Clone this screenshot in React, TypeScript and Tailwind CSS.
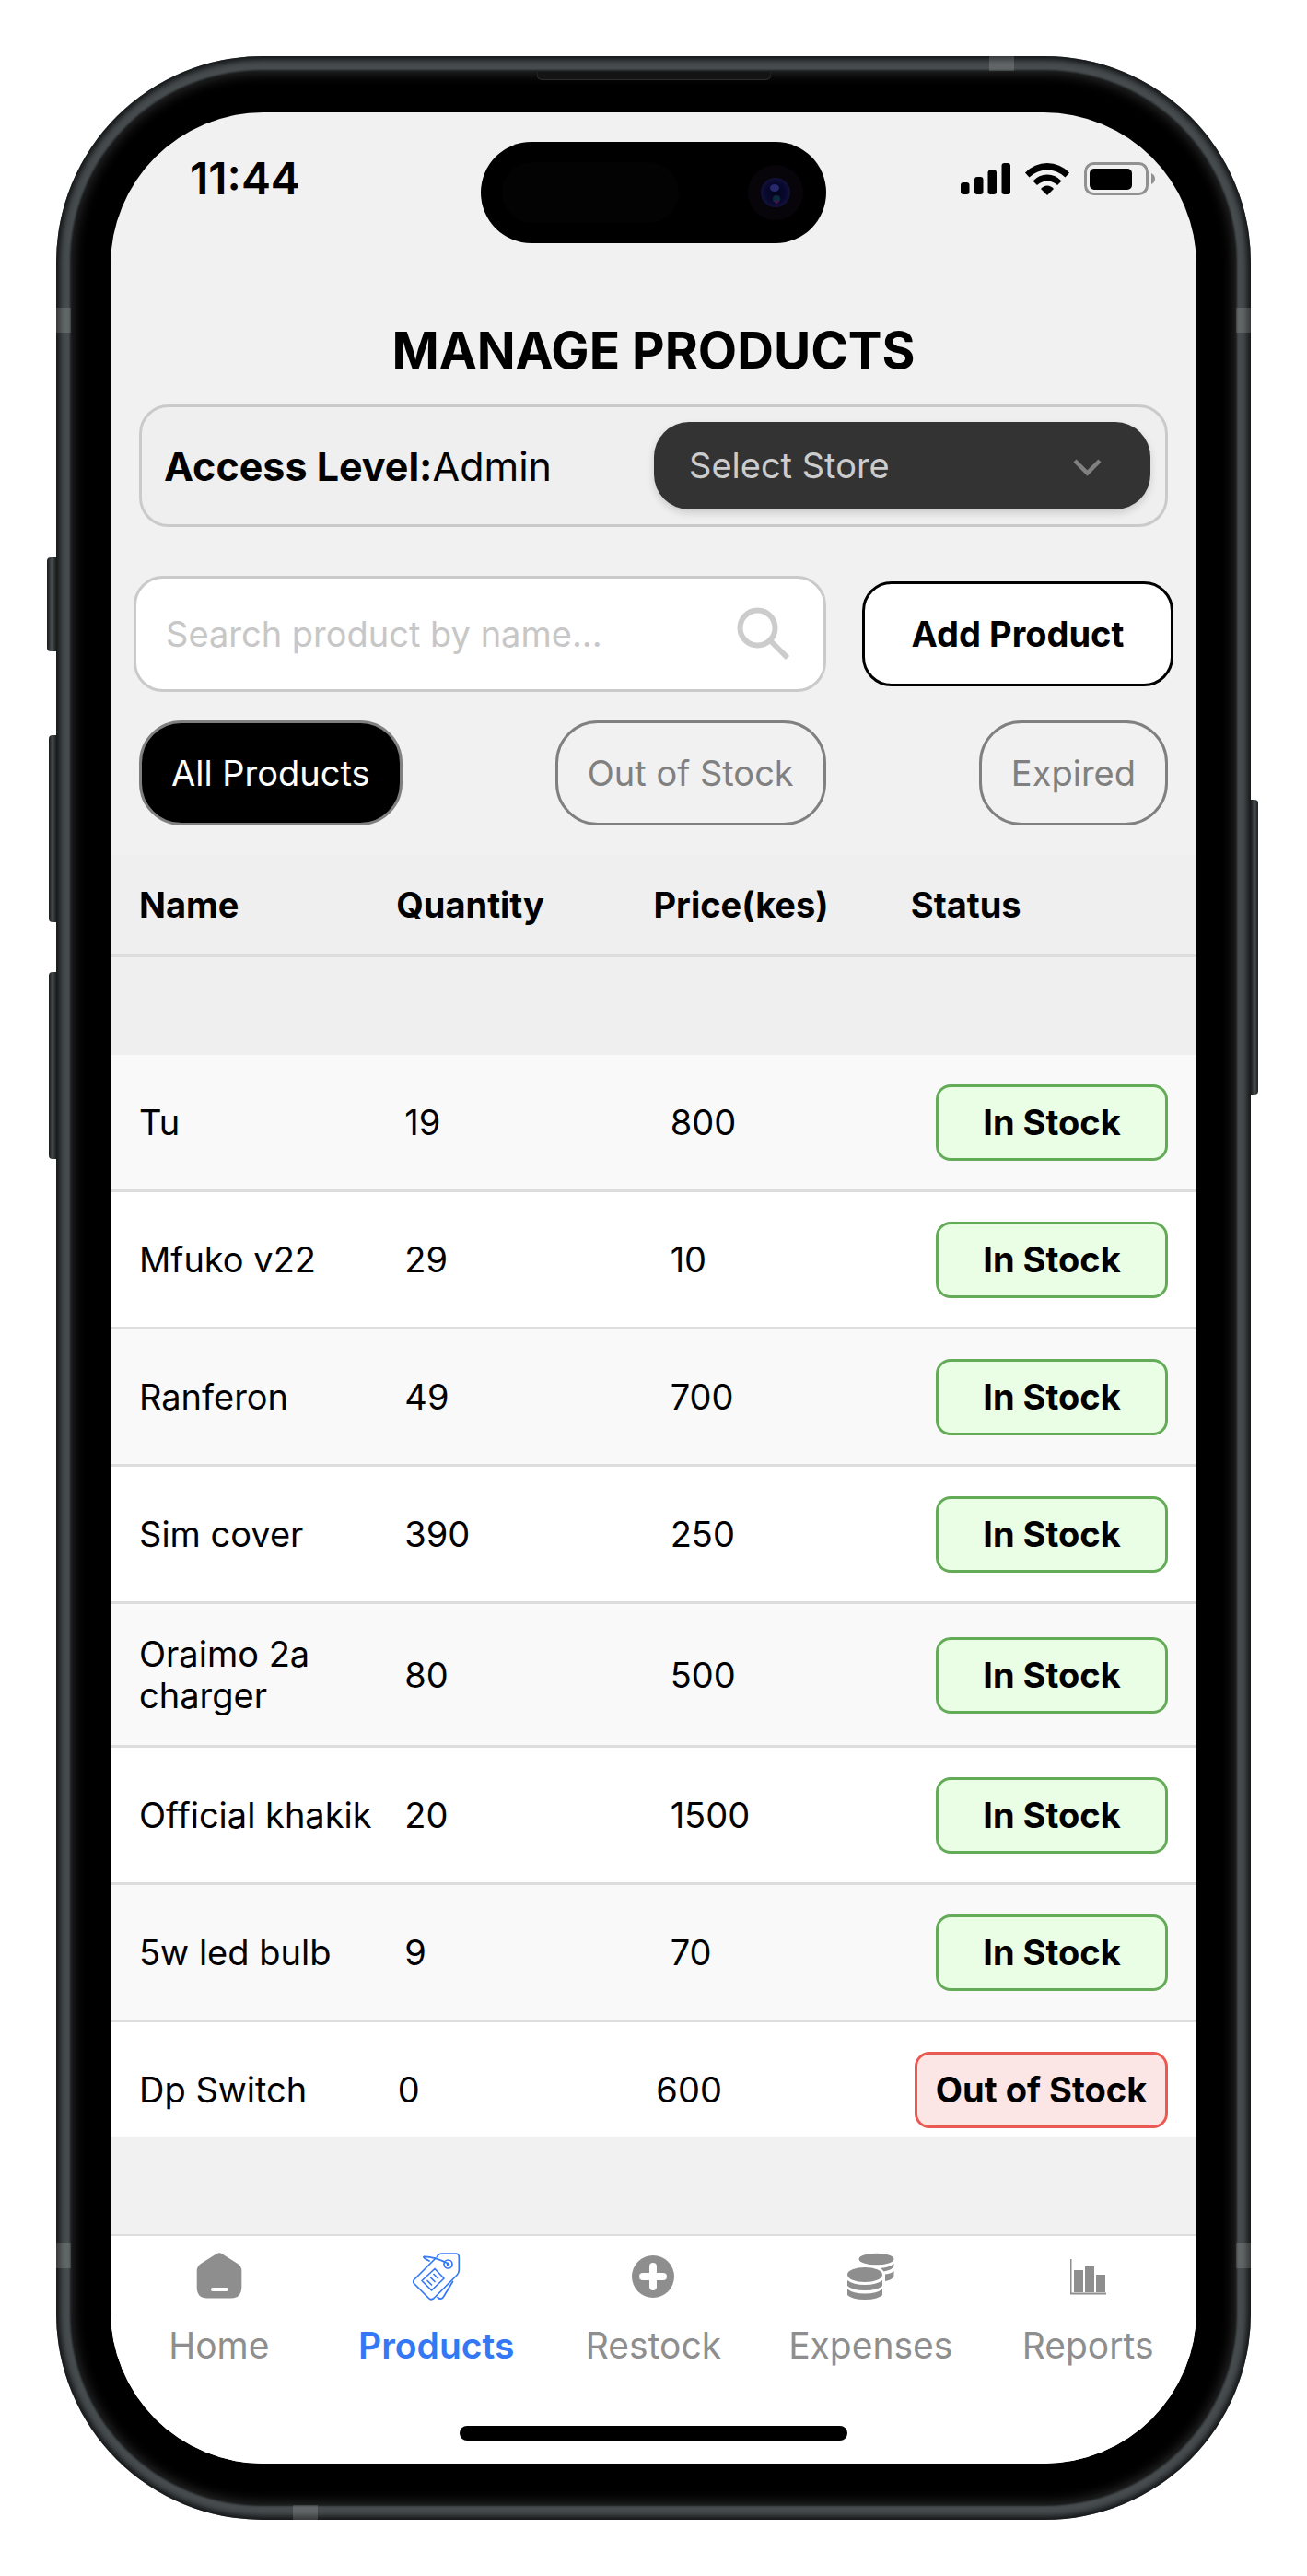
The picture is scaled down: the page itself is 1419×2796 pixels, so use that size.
import React from 'react';

type Product = {
  name: string;
  quantity: number;
  price: number;
};

const products: Product[] = [
  { name: 'Tu', quantity: 19, price: 800 },
  { name: 'Mfuko v22', quantity: 29, price: 10 },
  { name: 'Ranferon', quantity: 49, price: 700 },
  { name: 'Sim cover', quantity: 390, price: 250 },
  { name: 'Oraimo 2a charger', quantity: 80, price: 500 },
  { name: 'Official khakik', quantity: 20, price: 1500 },
  { name: '5w led bulb', quantity: 9, price: 70 },
  { name: 'Dp Switch', quantity: 0, price: 600 },
];

const HomeIcon = () => (
  <svg width="50" height="50" viewBox="0 0 50 50">
    <path d="M22 1.2Q25-.6 28 1.2L45 12Q49 14.800 49.300 19V38Q49 49.500 38 49.500H12Q1 49.500 .7 38V19Q1 14.800 5 12Z" fill="#8e8e8e" />
    <rect x="16" y="38" width="19" height="4" rx="2" fill="#fff" />
  </svg>
);

const TagIcon = () => (
  <svg width="52" height="52" viewBox="0 0 52 52" fill="none" stroke="#3478f6" strokeWidth="1.700" strokeLinecap="round" strokeLinejoin="round">
    <path d="M26.500 4.500Q28 1 32 1H46.500Q50.300 1 50.300 5V19Q50.300 22 48 24.500L23 49.500Q20 52 17.500 49.500L1.500 33.500Q-.2 31.500 1.500 29.500L25 6" />
    <path d="M18 9Q10 5 12.500 4.400Q22 4 38 11.500" />
    <circle cx="38.500" cy="12.500" r="4.500" />
    <circle cx="38.500" cy="12.500" r="1" fill="#3478f6" />
    <path d="M24 17.500L34 28L20.500 41L10 30.500ZM16 30.500L20.500 35M19.500 27L24 31.500M23 23.500L27.500 28" />
    <path d="M27 48.500Q31 52 33.500 48L43.500 31.500" />
  </svg>
);

const PlusIcon = () => (
  <svg width="46" height="50" viewBox="0 0 46 50">
    <circle cx="23" cy="26" r="23" fill="#8e8e8e" />
    <path d="M23 15V37M12 26H34" stroke="#fff" strokeWidth="8" strokeLinecap="round" />
  </svg>
);

const CoinsIcon = () => (
  <svg width="51" height="51" viewBox="0 0 51 51" fill="#8e8e8e">
    <ellipse cx="31.500" cy="7" rx="19" ry="6.300" />
    <path d="M36 17Q46 16 50.500 12V15Q48 19 39.500 20.500Q38 18 36 17Z" />
    <path d="M41 23.500Q48 22.500 50.500 20V25.500Q48 30 41 31Z" />
    <ellipse cx="19" cy="24" rx="19" ry="8" />
    <path d="M0 30Q6 35 19 35T38 30V36Q33 41 19 41T0 36Z" />
    <path d="M0 39.500Q6 44.500 19 44.500T38 39.500V46Q33 51 19 51T0 46Z" />
  </svg>
);

const ChartIcon = () => (
  <svg width="39" height="50" viewBox="0 0 39 50" fill="#8e8e8e">
    <path d="M0 7H1.500V43.500H39V45.500H0ZM4 19H14V43H4ZM16 15H26V43H16ZM28 24H38V43H28Z" />
  </svg>
);

const tabs = [
  { label: 'Home', icon: <HomeIcon /> },
  { label: 'Products', icon: <TagIcon />, active: true },
  { label: 'Restock', icon: <PlusIcon /> },
  { label: 'Expenses', icon: <CoinsIcon /> },
  { label: 'Reports', icon: <ChartIcon /> },
];

const StatusBar = () => (
  <header className="grid grid-cols-[1fr_375px_1fr] items-start pt-8">
    <time className="mt-3 pl-[86px] text-[48px] leading-[56px] font-semibold">11:44</time>
    <div className="flex h-[110px] items-center justify-between rounded-full bg-black pr-[25px] pl-[23px]">
      <div className="h-[66px] w-[192px] rounded-full bg-[#030303]" />
      <svg width="60" height="62" viewBox="0 0 60 62">
        <defs>
          <radialGradient id="lens">
            <stop offset="0" stopColor="#05051c" />
            <stop offset="0.650" stopColor="#08082e" />
            <stop offset="1" stopColor="#12123a" />
          </radialGradient>
        </defs>
        <circle cx="30" cy="31" r="30" fill="#08050a" />
        <circle cx="30" cy="31" r="16" fill="url(#lens)" />
        <ellipse cx="29" cy="26" rx="5" ry="4" fill="#28286e" />
        <ellipse cx="31" cy="38" rx="4" ry="4" fill="#0b2c3c" />
        <circle cx="31" cy="41" r="2" fill="#4a1247" />
      </svg>
    </div>
    <div className="mt-3 flex h-14 items-center justify-end gap-4 pr-11">
      <svg width="54" height="34" viewBox="0 0 54 34">
        <rect x="0" y="21" width="9.500" height="13" rx="3" />
        <rect x="15" y="15" width="9.500" height="19" rx="3" />
        <rect x="29.500" y="7.500" width="9.500" height="26.500" rx="3" />
        <rect x="44.500" y="0" width="9.500" height="34" rx="3" />
      </svg>
      <svg width="48" height="35" viewBox="0 0 48 35">
        <path d="M0 10.500Q10 0 24 0T48 10.500L43.500 15.500Q35 7.500 24 7.500T4.500 15.500Z" />
        <path d="M8.500 19.500Q15 12.500 24 12.500T39.500 19.500L35 24Q30 19.500 24 19.500T13 24Z" />
        <path d="M17 28Q20 24.500 24 24.500T31 28L24 35Z" />
      </svg>
      <svg width="78" height="36" viewBox="0 0 78 36">
        <rect x="1.500" y="1.500" width="67" height="33" rx="9" fill="none" stroke="#919191" strokeWidth="3" />
        <rect x="6" y="7" width="46" height="23" rx="5" />
        <path d="M73 12Q77 14 77 18T73 24Z" fill="#919191" />
      </svg>
    </div>
  </header>
);

const StoreBar = () => (
  <section className="mx-[31px] mt-[27px] flex items-center justify-between rounded-[32px] border-[3px] border-[#cacaca] bg-[#efefef] py-4 pr-4 pl-6">
    <p className="text-[43px] leading-[56px]">
      <b>Access Level:</b>Admin
    </p>
    <div className="relative w-[539px]">
      <select
        aria-label="Store"
        className="h-[95px] w-full appearance-none rounded-[38px] bg-[#333] px-[38px] text-[38px] text-[#ccc] shadow-[0_4px_8px_rgba(0,0,0,0.150)]"
      >
        <option>Select Store</option>
      </select>
      <svg className="pointer-events-none absolute top-[38px] right-[52px]" width="33" height="22" viewBox="0 0 33 22">
        <path d="M3 4L16.500 17.500L30 4" fill="none" stroke="#808080" strokeWidth="4.500" />
      </svg>
    </div>
  </section>
);

const SearchBar = () => (
  <section className="mx-[25px] mt-[53px] flex items-center gap-[39px]">
    <label className="flex h-[126px] min-w-0 flex-1 items-center rounded-[32px] border-[3px] border-[#cacaca] bg-white pr-9 pl-8">
      <input
        type="text"
        aria-label="Search product"
        placeholder="Search product by name..."
        className="min-w-0 flex-1 text-[38px] outline-none placeholder:text-[#c7c7c7]"
      />
      <svg width="58" height="58" viewBox="0 0 58 58" fill="none" stroke="#ccc" strokeWidth="6">
        <circle cx="22.500" cy="22.500" r="19" />
        <path d="M36 36L55 55" />
      </svg>
    </label>
    <button className="h-[114px] w-[338px] rounded-[32px] border-[3px] border-black bg-white text-[38px] font-bold">
      Add Product
    </button>
  </section>
);

const Filters = () => (
  <nav className="mx-[31px] mt-[31px] mb-8 flex justify-between text-[38px]">
    <button className="h-[114px] rounded-[46px] border-[3px] border-[#808080] bg-black px-8 text-white">All Products</button>
    <button className="h-[114px] rounded-[46px] border-[3px] border-[#808080] px-8 text-[#808080]">Out of Stock</button>
    <button className="h-[114px] rounded-[46px] border-[3px] border-[#808080] px-8 text-[#808080]">Expired</button>
  </nav>
);

const ProductTable = () => (
  <table className="block text-[38px] leading-[45px]">
    <thead className="block bg-[#efefef] pb-[106px]">
      <tr className="flex border-b-[3px] border-[#ddd] px-[31px] pt-8 pb-[31px] text-left">
        <th className="flex-1 font-bold">Name</th>
        <th className="flex-1 font-bold">Quantity</th>
        <th className="flex-1 font-bold">Price(kes)</th>
        <th className="flex-1 font-bold">Status</th>
      </tr>
    </thead>
    <tbody className="block">
      {products.map(({ name, quantity, price }) => (
        <tr
          key={name}
          className="flex items-center border-b-[3px] border-[#ddd] bg-white px-[31px] pt-8 pb-[31px] odd:bg-[#f9f9f9] last:border-0 last:pb-[9px]"
        >
          <td className="flex-1">{name}</td>
          <td className="flex-1">{quantity}</td>
          <td className="flex-1">{price}</td>
          <td>
            {quantity > 0 ? (
              <span className="flex h-[83px] w-[252px] items-center justify-center rounded-2xl border-[3px] border-[#64ab58] bg-[#eafee6] font-bold">
                In Stock
              </span>
            ) : (
              <span className="flex h-[83px] w-[275px] items-center justify-center rounded-2xl border-[3px] border-[#eb5a52] bg-[#fce6e5] font-bold">
                Out of Stock
              </span>
            )}
          </td>
        </tr>
      ))}
    </tbody>
  </table>
);

const TabBar = () => (
  <footer className="mt-[106px] border-t-2 border-[#ddd] bg-white pb-[25px]">
    <nav className="grid grid-cols-5">
      {tabs.map(({ label, icon, active }) => (
        <a
          key={label}
          href="#"
          className={
            active
              ? 'flex flex-col items-center pt-[18px] text-[39px] font-semibold text-[#3478f6]'
              : 'flex flex-col items-center pt-[18px] text-[39px] text-[#8e8e8e]'
          }
        >
          <span className="flex h-[52px] items-start">{icon}</span>
          <span className="mt-[22px] leading-[54px]">{label}</span>
        </a>
      ))}
    </nav>
    <div className="mx-auto mt-[60px] h-4 w-[421px] rounded-full bg-black" />
  </footer>
);

// Hardware buttons and antenna lines around the edge of the phone
const FrameDetails = () => (
  <>
    <i className="absolute top-[544px] -left-[10px] h-[102px] w-[10px] rounded-l bg-linear-to-r from-[#17191a] via-[#4a4f51] to-[#1d1f20]" />
    <i className="absolute top-[737px] -left-2 h-[203px] w-2 rounded-l bg-linear-to-r from-[#17191a] via-[#4a4f51] to-[#1d1f20]" />
    <i className="absolute top-[994px] -left-2 h-[203px] w-2 rounded-l bg-linear-to-r from-[#17191a] via-[#4a4f51] to-[#1d1f20]" />
    <i className="absolute top-[807px] -right-2 h-[320px] w-2 rounded-r bg-linear-to-r from-[#17191a] via-[#4a4f51] to-[#1d1f20]" />
    <i className="absolute top-[273px] left-0 h-[27px] w-4 bg-white/15" />
    <i className="absolute top-[273px] right-0 h-[27px] w-4 bg-white/15" />
    <i className="absolute bottom-[273px] left-0 h-[27px] w-4 bg-white/15" />
    <i className="absolute right-0 bottom-[273px] h-[27px] w-4 bg-white/15" />
    <i className="absolute top-0 right-[257px] h-4 w-[27px] bg-white/15" />
    <i className="absolute bottom-0 left-[257px] h-4 w-[27px] bg-white/15" />
    <i className="absolute top-[17px] left-1/2 h-[9px] w-[255px] -translate-x-1/2 rounded-b-md border-x border-b border-[#2c2c2c] bg-[#141414]" />
  </>
);

const App = () => (
  <div className="bg-white p-[61px] font-['Inter','Liberation_Sans',sans-serif] text-black">
    <div className="relative rounded-[224px] bg-[#474c4e] p-[17px] shadow-[inset_0_0_6px_4px_#121415]">
      <div className="rounded-[206px] bg-black px-[42px] py-11 shadow-[inset_0_0_14px_1px_#2e2e2e,0_0_2px_2px_#1b1d1e]">
        <main className="overflow-hidden rounded-[166px] bg-[#f1f1f1]">
          <StatusBar />
          <h1 className="mt-[84px] text-center text-[55px] leading-[64px] font-bold">MANAGE PRODUCTS</h1>
          <StoreBar />
          <SearchBar />
          <Filters />
          <ProductTable />
          <TabBar />
        </main>
      </div>
      <FrameDetails />
    </div>
  </div>
);

export default App;
